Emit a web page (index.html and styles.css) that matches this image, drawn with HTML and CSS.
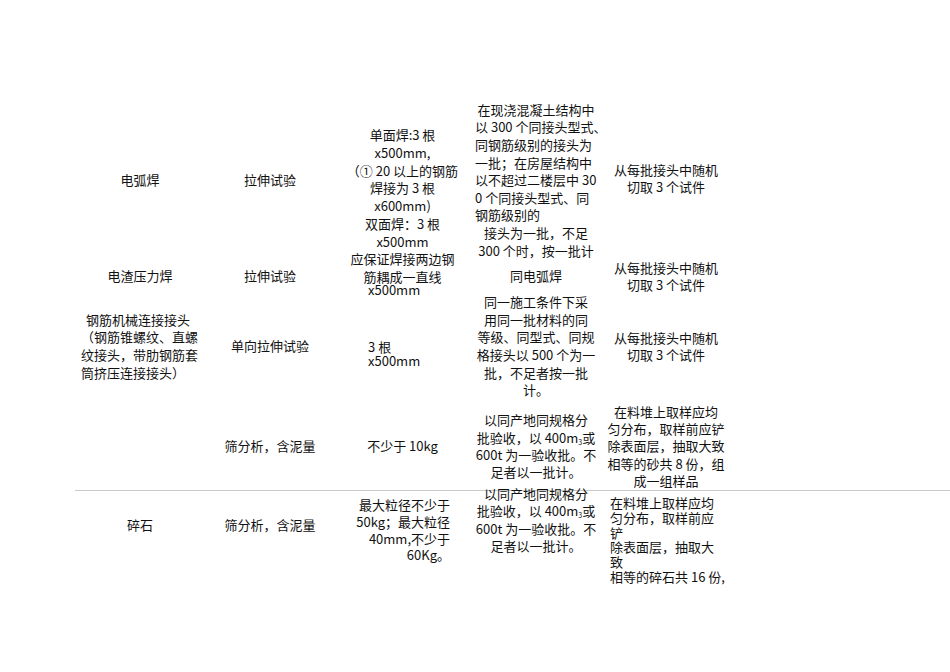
FILE: index.html
```html
<!DOCTYPE html>
<html lang="zh-CN">
<head>
<meta charset="utf-8">
<title>钢筋接头及砂石取样</title>
<link rel="stylesheet" href="styles.css">
</head>
<body>
<div class="sheet">
  <!-- row 1 -->
  <div class="cell c1 r1">电弧焊</div>
  <div class="cell c2 r1">拉伸试验</div>
  <div class="cell c3 r1 weld">
    <div>单面焊:3 根</div>
    <div>x500mm,</div>
    <div>（① 20 以上的钢筋</div>
    <div>焊接为 3 根</div>
    <div>x600mm)</div>
    <div>双面焊：3 根</div>
    <div>x500mm</div>
    <div>应保证焊接两边钢</div>
    <div>筋耦成一直线</div>
    <div class="overlap">x500mm</div>
  </div>
  <div class="cell c4 r1">
    <div>在现浇混凝土结构中</div>
    <div class="l">以 300 个同接头型式、</div>
    <div class="l">同钢筋级别的接头为</div>
    <div class="l">一批；在房屋结构中</div>
    <div class="l">以不超过二楼层中 30</div>
    <div class="l">0 个同接头型式、同</div>
    <div class="l">钢筋级别的</div>
    <div>接头为一批，不足</div>
    <div>300 个时，按一批计</div>
  </div>
  <div class="cell c5 r1 tight">
    <div>从每批接头中随机</div>
    <div>切取 3 个试件</div>
  </div>

  <!-- row 2 -->
  <div class="cell c1 r2">电渣压力焊</div>
  <div class="cell c2 r2">拉伸试验</div>
  <div class="cell c4 r2">同电弧焊</div>
  <div class="cell c5 r2 tight">
    <div>从每批接头中随机</div>
    <div>切取 3 个试件</div>
  </div>

  <!-- row 3 -->
  <div class="cell c1 r3 mech">
    <div class="ind">钢筋机械连接接头</div>
    <div>（钢筋锥螺纹、直螺</div>
    <div>纹接头，带肋钢筋套</div>
    <div>筒挤压连接接头）</div>
  </div>
  <div class="cell c2 r3">单向拉伸试验</div>
  <div class="cell c3 r3 three">
    <div>3 根</div>
    <div>x500mm</div>
  </div>
  <div class="cell c4 r3">
    <div>同一施工条件下采</div>
    <div>用同一批材料的同</div>
    <div>等级、同型式、同规</div>
    <div>格接头以 500 个为一</div>
    <div>批，不足者按一批</div>
    <div>计。</div>
  </div>
  <div class="cell c5 r3 tight">
    <div>从每批接头中随机</div>
    <div>切取 3 个试件</div>
  </div>

  <!-- row 4 -->
  <div class="cell c2 r4">筛分析，含泥量</div>
  <div class="cell c3 r4">不少于 10kg</div>
  <div class="cell c4 r4 mid">
    <div>以同产地同规格分</div>
    <div>批验收，以 400m<span class="sub">3</span>或</div>
    <div>600t 为一验收批。不</div>
    <div>足者以一批计。</div>
  </div>
  <div class="cell c5 r4 mid">
    <div>在料堆上取样应均</div>
    <div>匀分布，取样前应铲</div>
    <div>除表面层，抽取大致</div>
    <div>相等的砂共 8 份，组</div>
    <div>成一组样品</div>
  </div>

  <div class="rule"></div>

  <!-- row 5 -->
  <div class="cell c1 r6">碎石</div>
  <div class="cell c2 r6">筛分析，含泥量</div>
  <div class="cell c3 r6 stone-size">
    <div>最大粒径不少于</div>
    <div>50kg；最大粒径</div>
    <div>40mm,不少于</div>
    <div>60Kg。</div>
  </div>
  <div class="cell c4 r6 stone-batch">
    <div>以同产地同规格分</div>
    <div>批验收，以 400m<span class="sub">3</span>或</div>
    <div>600t 为一验收批。不</div>
    <div>足者以一批计。</div>
  </div>
  <div class="cell c5 r6 stone-sample">
    <div>在料堆上取样应均</div>
    <div>匀分布，取样前应</div>
    <div>铲</div>
    <div>除表面层，抽取大</div>
    <div>致</div>
    <div>相等的碎石共 16 份,</div>
  </div>
</div>
</body>
</html>
```
FILE: styles.css
```css
html, body {
  margin: 0;
  padding: 0;
  background: #ffffff;
}

body {
  font-family: "Noto Sans CJK SC", "Noto Sans", sans-serif;
  font-size: 13px;
  line-height: 17.6px;
  color: #111111;
  min-height: 672px;
}

.sheet {
  margin: 98px 0 0 75px;
  padding-bottom: 80px;
  width: 875px;
  display: grid;
  grid-template-columns: 130px 130px 135px 132px 128px 1fr;
  grid-template-rows: 164px 28px 112px 88px 1px 68px;
}

.cell {
  align-self: center;
  text-align: center;
  white-space: nowrap;
}

.c1 { grid-column: 1; }
.c2 { grid-column: 2; }
.c3 { grid-column: 3; }
.c4 { grid-column: 4; }
.c5 { grid-column: 5; }

.r1 { grid-row: 1; }
.r2 { grid-row: 2; }
.r3 { grid-row: 3; }
.r4 { grid-row: 4; }
.r6 { grid-row: 6; }

.tight { line-height: 17px; }

.c5.r1 { margin-top: -4px; }

.mid { line-height: 17.3px; }

.weld {
  grid-row: 1 / 3;
  align-self: start;
  padding-top: 28px;
  line-height: 17.75px;
}

.weld .overlap {
  margin-top: -4.6px;
  text-align: left;
  padding-left: 33px;
}

.c4 .l {
  text-align: left;
  padding-left: 5px;
}

.mech {
  text-align: left;
  padding-left: 6px;
}

.mech .ind { padding-left: 5px; }

.three {
  align-self: start;
  padding-top: 50px;
  padding-left: 33px;
  text-align: left;
  line-height: 14px;
}

.sub {
  font-size: 7px;
  vertical-align: -2px;
  line-height: 0;
}

.rule {
  grid-column: 1 / -1;
  grid-row: 5;
  background: #c9c9c9;
}

.stone-size {
  align-self: start;
  padding-top: 6px;
  padding-right: 20px;
  text-align: right;
  line-height: 16.8px;
}

.stone-batch {
  align-self: start;
  margin-top: -6px;
  line-height: 17.4px;
}

.stone-sample {
  align-self: start;
  padding-top: 5px;
  padding-left: 8px;
  text-align: left;
  line-height: 14.8px;
}
```
